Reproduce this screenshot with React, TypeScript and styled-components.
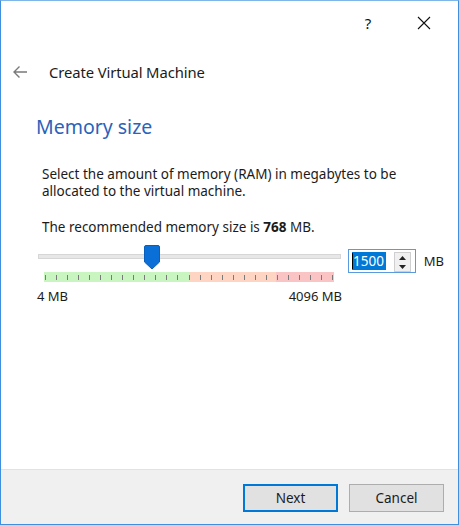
import React from "react";
import styled, { createGlobalStyle } from "styled-components";

const Global = createGlobalStyle`
  html, body { margin: 0; padding: 0; background: #fff; }
  body { font-family: "Noto Sans", "Open Sans", sans-serif; color: #1b1b1b; }
`;

const Window = styled.div`
  box-sizing: border-box;
  width: 459px;
  height: 525px;
  border: 1px solid #3f8fdf;
  border-top-color: #7fb6ea;
  background: #fff;
  display: flex;
  flex-direction: column;
`;

const TitleBar = styled.div`
  height: 43px;
  display: flex;
  justify-content: flex-end;
  align-items: center;
  padding-right: 6px;
`;

const CaptionButton = styled.div`
  width: 56px;
  height: 40px;
  display: flex;
  align-items: center;
  justify-content: center;
  font-size: 15px;
  color: #111;
`;

const HeaderRow = styled.div`
  display: flex;
  align-items: center;
  height: 28px;
  margin-top: 14px;
  padding-left: 11px;
`;

const Title = styled.div`
  font-size: 14.8px;
  letter-spacing: -0.1px;
  margin-left: 21px;
  color: #1b1b1b;
`;

const Content = styled.div`
  flex: 1;
  padding-left: 35px;
  padding-right: 14px;
`;

const Heading = styled.div`
  font-size: 19.5px;
  color: #2c62b9;
  margin-top: 28px;
  line-height: 26px;
`;

const Para = styled.div`
  margin-top: 26px;
  margin-left: 6px;
  font-size: 13.5px;
  line-height: 17px;
`;

const Recommended = styled.div`
  margin-top: 19px;
  margin-left: 6px;
  font-size: 13.5px;
  line-height: 17px;
  b { font-weight: 700; }
`;

const SliderRow = styled.div`
  display: flex;
  align-items: flex-start;
  margin-top: 6px;
`;

const SliderCol = styled.div`
  width: 306px;
  display: flex;
  flex-direction: column;
`;

const TrackArea = styled.div`
  position: relative;
  height: 30px;
`;

const Track = styled.div`
  margin-top: 12px;
  height: 3px;
  border: 1px solid #d6d6d6;
  background: #e7e7e7;
  margin-left: 2px;
  margin-right: 1px;
`;

const Thumb = styled.svg`
  position: absolute;
  top: 3px;
`;

const TickBar = styled.div`
  position: relative;
  height: 10px;
  margin-left: 8px;
  margin-right: 8px;
  display: flex;
`;

const Zone = styled.div<{ $c: string; $w: number }>`
  background: ${(p) => p.$c};
  width: ${(p) => p.$w}px;
  height: 10px;
`;

const Tick = styled.div`
  position: absolute;
  top: 3px;
  width: 1px;
  height: 5px;
  background: #7a7a7a;
`;

const Labels = styled.div`
  display: flex;
  justify-content: space-between;
  font-size: 13px;
  margin-top: 5px;
  padding-left: 1px;
`;

const SpinBox = styled.div`
  margin-left: 6px;
  margin-top: 7px;
  box-sizing: border-box;
  width: 71px;
  height: 24px;
  border: 1px solid #5a9be0;
  display: flex;
  align-items: center;
  padding-left: 3px;
  position: relative;
`;

const Selected = styled.span`
  background: #0078d7;
  color: #fff;
  font-size: 13.5px;
  line-height: 18px;
  padding: 0 1px;
  width: 32px;
`;

const Caret = styled.span`
  position: absolute;
  left: 3px;
  top: 3px;
  width: 1px;
  height: 16px;
  background: #000;
`;

const Spinner = styled.div`
  position: absolute;
  right: 4px;
  top: 2px;
  width: 15px;
  height: 18px;
  border: 1px solid #cfcfcf;
  background: #f0f0f0;
  display: flex;
  flex-direction: column;
  align-items: center;
  justify-content: space-around;
`;

const Unit = styled.div`
  font-size: 13px;
  margin-left: 8px;
  margin-top: 10px;
`;

const Footer = styled.div`
  height: 54px;
  background: #f0f0f0;
  border-top: 1px solid #e2e2e2;
  display: flex;
  justify-content: flex-end;
  align-items: center;
  gap: 11px;
  padding-right: 14px;
`;

const Button = styled.button<{ $default?: boolean }>`
  box-sizing: border-box;
  width: 95px;
  height: 28px;
  font-family: inherit;
  font-size: 13.5px;
  color: #1b1b1b;
  background: #e1e1e1;
  border: 1px solid ${(p) => (p.$default ? "#0078d7" : "#adadad")};
  box-shadow: ${(p) => (p.$default ? "inset 0 0 0 1px #0078d7" : "none")};
  margin-top: 2px;
  padding: 0;
`;

const ticks = Array.from({ length: 27 }, (_, i) => i);

export default function App() {
  const tickWidth = 290;
  return (
    <>
      <Global />
      <Window>
        <TitleBar>
          <CaptionButton>?</CaptionButton>
          <CaptionButton>
            <svg width="14" height="14" viewBox="0 0 14 14">
              <path d="M1 1 L13 13 M13 1 L1 13" stroke="#111" strokeWidth="1.1" />
            </svg>
          </CaptionButton>
        </TitleBar>
        <HeaderRow>
          <svg width="16" height="14" viewBox="0 0 16 14">
            <path d="M15 7 H2 M7.5 1.5 L2 7 L7.5 12.5" stroke="#7a7a7a" strokeWidth="1.4" fill="none" />
          </svg>
          <Title>Create Virtual Machine</Title>
        </HeaderRow>
        <Content>
          <Heading>Memory size</Heading>
          <Para>
            Select the amount of memory (RAM) in megabytes to be
            <br />
            allocated to the virtual machine.
          </Para>
          <Recommended>
            The recommended memory size is <b>768</b> MB.
          </Recommended>
          <SliderRow>
            <SliderCol>
              <TrackArea>
                <Track />
                <Thumb width="16" height="25" viewBox="0 0 16 25" style={{ left: 108 }}>
                  <path d="M2 0.5 H14 Q15.5 0.5 15.5 2 V17 L8 24 L0.5 17 V2 Q0.5 0.5 2 0.5 Z" fill="#0a6fd6" stroke="#0a5fba" />
                </Thumb>
              </TrackArea>
              <TickBar>
                <Zone $c="#c8f5c0" $w={145} />
                <Zone $c="#fdd5c2" $w={87} />
                <Zone $c="#fbc4c4" $w={58} />
                {ticks.map((i) => (
                  <Tick key={i} style={{ left: 1 + (i * (tickWidth - 3)) / 26 }} />
                ))}
              </TickBar>
              <Labels>
                <span>4 MB</span>
                <span>4096 MB</span>
              </Labels>
            </SliderCol>
            <SpinBox>
              <Selected>1500</Selected>
              <Caret />
              <Spinner>
                <svg width="7" height="4" viewBox="0 0 7 4"><path d="M0 4 L3.5 0 L7 4 Z" fill="#222" /></svg>
                <svg width="7" height="4" viewBox="0 0 7 4"><path d="M0 0 L3.5 4 L7 0 Z" fill="#222" /></svg>
              </Spinner>
            </SpinBox>
            <Unit>MB</Unit>
          </SliderRow>
        </Content>
        <Footer>
          <Button $default>Next</Button>
          <Button>Cancel</Button>
        </Footer>
      </Window>
    </>
  );
}
